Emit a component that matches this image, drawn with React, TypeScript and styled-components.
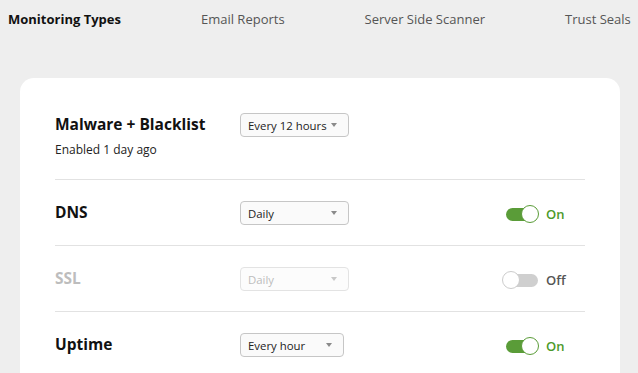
import React from "react";
import styled, { createGlobalStyle } from "styled-components";

const Global = createGlobalStyle`
  html, body { margin: 0; padding: 0; background: #eeeeee; }
  body { font-family: "Open Sans", "Liberation Sans", sans-serif; color: #111; overflow: hidden; }
`;

const Page = styled.div`
  width: 638px;
  height: 373px;
  overflow: hidden;
`;

const Tabs = styled.nav`
  display: flex;
  gap: 80px;
  padding: 0 0 0 8px;
  height: 38px;
  align-items: center;
`;

const Tab = styled.span<{ $active?: boolean }>`
  font-size: 13px;
  font-weight: ${(p) => (p.$active ? 700 : 400)};
  color: ${(p) => (p.$active ? "#111" : "#555")};
  white-space: nowrap;
`;

const Card = styled.section`
  margin: 40px 18px 0 20px;
  background: #fff;
  border-radius: 14px;
  padding: 0 35px;
  height: 320px;
`;

const Row = styled.div<{ $first?: boolean }>`
  display: grid;
  grid-template-columns: 185px 1fr auto;
  align-items: ${(p) => (p.$first ? "start" : "center")};
  padding: ${(p) => (p.$first ? "36px 0 20px" : "21px 0 20px")};
  border-bottom: 1px solid #e2e2e2;
`;

const TitleBlock = styled.div`
  display: flex;
  flex-direction: column;
  gap: 7px;
`;

const Title = styled.div<{ $disabled?: boolean; $first?: boolean }>`
  font-size: 15.5px;
  line-height: 20px;
  font-weight: 700;
  margin-top: ${(p) => (p.$first ? "0" : "-2px")};
  color: ${(p) => (p.$disabled ? "#bdbdbd" : "#111")};
`;

const Sub = styled.div`
  font-size: 12px;
  line-height: 18px;
  color: #222;
`;

const Select = styled.div<{ $w: number; $disabled?: boolean; $first?: boolean }>`
  box-sizing: border-box;
  width: ${(p) => p.$w}px;
  height: 24px;
  margin-top: ${(p) => (p.$first ? "-1px" : "0")};
  border: 1px solid ${(p) => (p.$disabled ? "#e3e3e3" : "#c6c6c6")};
  border-radius: 4px;
  background: ${(p) => (p.$disabled ? "#fcfcfc" : "#fafafa")};
  display: flex;
  align-items: center;
  justify-content: space-between;
  padding: 0 11px 0 7px;
  font-size: 11.4px;
  color: ${(p) => (p.$disabled ? "#bdbdbd" : "#222")};
`;

const Caret = styled.span<{ $disabled?: boolean }>`
  width: 0;
  height: 0;
  border-left: 3.5px solid transparent;
  border-right: 3.5px solid transparent;
  border-top: 4px solid ${(p) => (p.$disabled ? "#c8c8c8" : "#8a8a8a")};
`;

const ToggleGroup = styled.div`
  display: flex;
  align-items: center;
  gap: 8px;
  padding-right: 19px;
  padding-top: 2px;
`;

const Track = styled.span<{ $on: boolean }>`
  position: relative;
  display: inline-block;
  width: 32px;
  height: 13px;
  border-radius: 7px;
  background: ${(p) => (p.$on ? "#5a9c38" : "#cfcfcf")};
  margin-left: ${(p) => (p.$on ? "0" : "4px")};
`;

const Knob = styled.span<{ $on: boolean }>`
  position: absolute;
  top: -3px;
  ${(p) => (p.$on ? "right: -1px;" : "left: -4px;")}
  box-sizing: border-box;
  width: 18px;
  height: 18px;
  border-radius: 50%;
  background: #fff;
  border: 1px solid ${(p) => (p.$on ? "#5a9c38" : "#cccccc")};
`;

const State = styled.span<{ $on: boolean }>`
  font-size: 13px;
  font-weight: 600;
  color: ${(p) => (p.$on ? "#4c9a2a" : "#555")};
  min-width: 20px;
`;

function Toggle({ on }: { on: boolean }) {
  return (
    <ToggleGroup>
      <Track $on={on}>
        <Knob $on={on} />
      </Track>
      <State $on={on}>{on ? "On" : "Off"}</State>
    </ToggleGroup>
  );
}

export default function App() {
  return (
    <Page>
      <Global />
      <Tabs>
        <Tab $active>Monitoring Types</Tab>
        <Tab>Email Reports</Tab>
        <Tab>Server Side Scanner</Tab>
        <Tab>Trust Seals</Tab>
      </Tabs>
      <Card>
        <Row $first>
          <TitleBlock>
            <Title $first>Malware + Blacklist</Title>
            <Sub>Enabled 1 day ago</Sub>
          </TitleBlock>
          <Select $w={109} $first>
            Every 12 hours <Caret />
          </Select>
          <span />
        </Row>
        <Row>
          <Title>DNS</Title>
          <Select $w={109}>
            Daily <Caret />
          </Select>
          <Toggle on />
        </Row>
        <Row>
          <Title $disabled>SSL</Title>
          <Select $w={109} $disabled>
            Daily <Caret $disabled />
          </Select>
          <Toggle on={false} />
        </Row>
        <Row>
          <Title>Uptime</Title>
          <Select $w={104}>
            Every hour <Caret />
          </Select>
          <Toggle on />
        </Row>
      </Card>
    </Page>
  );
}
